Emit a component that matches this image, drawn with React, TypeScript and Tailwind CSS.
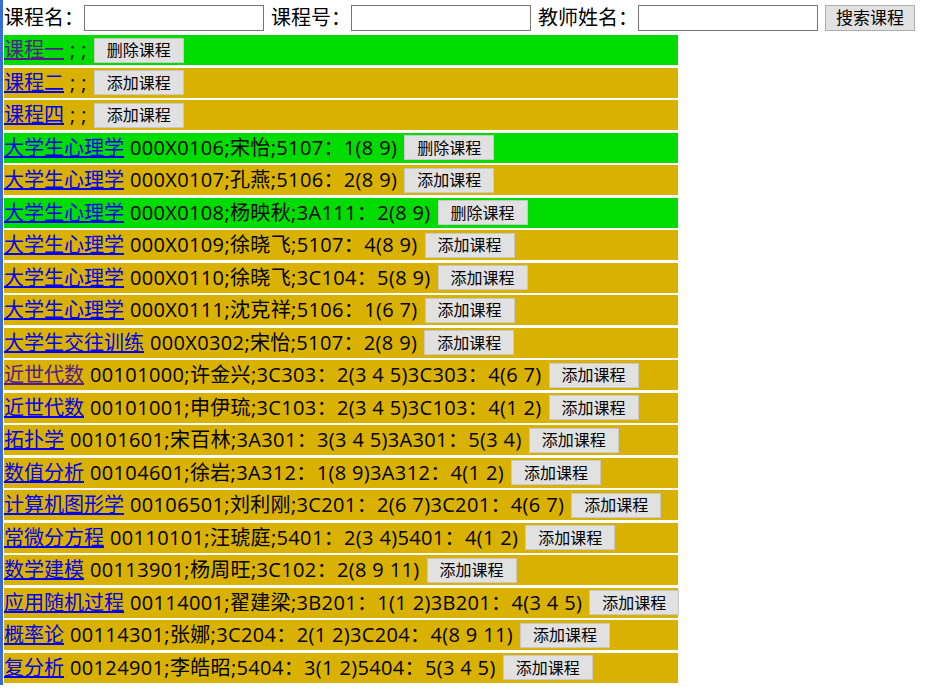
import React from 'react';

type Row = { name: string; info: string; selected: boolean; visited?: boolean };

const ROWS: Row[] = [
  { name: '课程一', info: '; ;', selected: true, visited: true },
  { name: '课程二', info: '; ;', selected: false },
  { name: '课程四', info: '; ;', selected: false },
  { name: '大学生心理学', info: '000X0106;宋怡;5107：1(8 9)', selected: true },
  { name: '大学生心理学', info: '000X0107;孔燕;5106：2(8 9)', selected: false },
  { name: '大学生心理学', info: '000X0108;杨映秋;3A111：2(8 9)', selected: true },
  { name: '大学生心理学', info: '000X0109;徐晓飞;5107：4(8 9)', selected: false },
  { name: '大学生心理学', info: '000X0110;徐晓飞;3C104：5(8 9)', selected: false },
  { name: '大学生心理学', info: '000X0111;沈克祥;5106：1(6 7)', selected: false },
  { name: '大学生交往训练', info: '000X0302;宋怡;5107：2(8 9)', selected: false },
  { name: '近世代数', info: '00101000;许金兴;3C303：2(3 4 5)3C303：4(6 7)', selected: false, visited: true },
  { name: '近世代数', info: '00101001;申伊琉;3C103：2(3 4 5)3C103：4(1 2)', selected: false },
  { name: '拓扑学', info: '00101601;宋百林;3A301：3(3 4 5)3A301：5(3 4)', selected: false },
  { name: '数值分析', info: '00104601;徐岩;3A312：1(8 9)3A312：4(1 2)', selected: false },
  { name: '计算机图形学', info: '00106501;刘利刚;3C201：2(6 7)3C201：4(6 7)', selected: false },
  { name: '常微分方程', info: '00110101;汪琥庭;5401：2(3 4)5401：4(1 2)', selected: false },
  { name: '数学建模', info: '00113901;杨周旺;3C102：2(8 9 11)', selected: false },
  { name: '应用随机过程', info: '00114001;翟建梁;3B201：1(1 2)3B201：4(3 4 5)', selected: false },
  { name: '概率论', info: '00114301;张娜;3C204：2(1 2)3C204：4(8 9 11)', selected: false },
  { name: '复分析', info: '00124901;李皓昭;5404：3(1 2)5404：5(3 4 5)', selected: false },
];

const font = "font-['Open_Sans','Noto_Sans_CJK_SC',sans-serif]";

function Btn({ children }: { children: React.ReactNode }) {
  return (
    <button className="shrink-0 h-[25px] px-[12px] bg-[#e1e1e1] border border-[#c8c8c8] text-[16px] leading-none text-black">
      {children}
    </button>
  );
}

function Field({ label }: { label: string }) {
  return (
    <>
      <span className="shrink-0 whitespace-nowrap">{label}</span>
      <input className="shrink-0 w-[180px] h-[26px] border border-[#767676] bg-white mr-[7px]" />
    </>
  );
}

export default function App() {
  return (
    <div className={`${font} text-[20px] text-black bg-white w-[927px] h-[696px]`}>
      <div className="border-l-[3px] border-[#3b6bd6] pl-[1px] pb-[2px] w-fit">
        {/* Search bar */}
        <div className="flex items-center h-[35px] whitespace-nowrap">
          <Field label="课程名：" />
          <Field label="课程号：" />
          <Field label="教师姓名：" />
          <button className="shrink-0 h-[26px] w-[90px] bg-[#e1e1e1] border border-[#adadad] text-[17px] leading-none">
            搜索课程
          </button>
        </div>

        {/* Course rows */}
        <div className="flex flex-col gap-[2.5px] w-[674px]">
          {ROWS.map((r, i) => (
            <div
              key={i}
              className={
                'flex items-center h-[30px] whitespace-nowrap ' +
                (r.selected ? 'bg-[#00dc00]' : 'bg-[#d9b100]')
              }
            >
              <a
                href="#"
                className={'underline ' + (r.visited ? 'text-[#551a8b]' : 'text-[#0000ee]')}
              >
                {r.name}
              </a>
              <span className="ml-[6px] mr-[7px] tracking-[0.35px]">{r.info}</span>
              <Btn>{r.selected ? '删除课程' : '添加课程'}</Btn>
            </div>
          ))}
        </div>
      </div>
    </div>
  );
}
